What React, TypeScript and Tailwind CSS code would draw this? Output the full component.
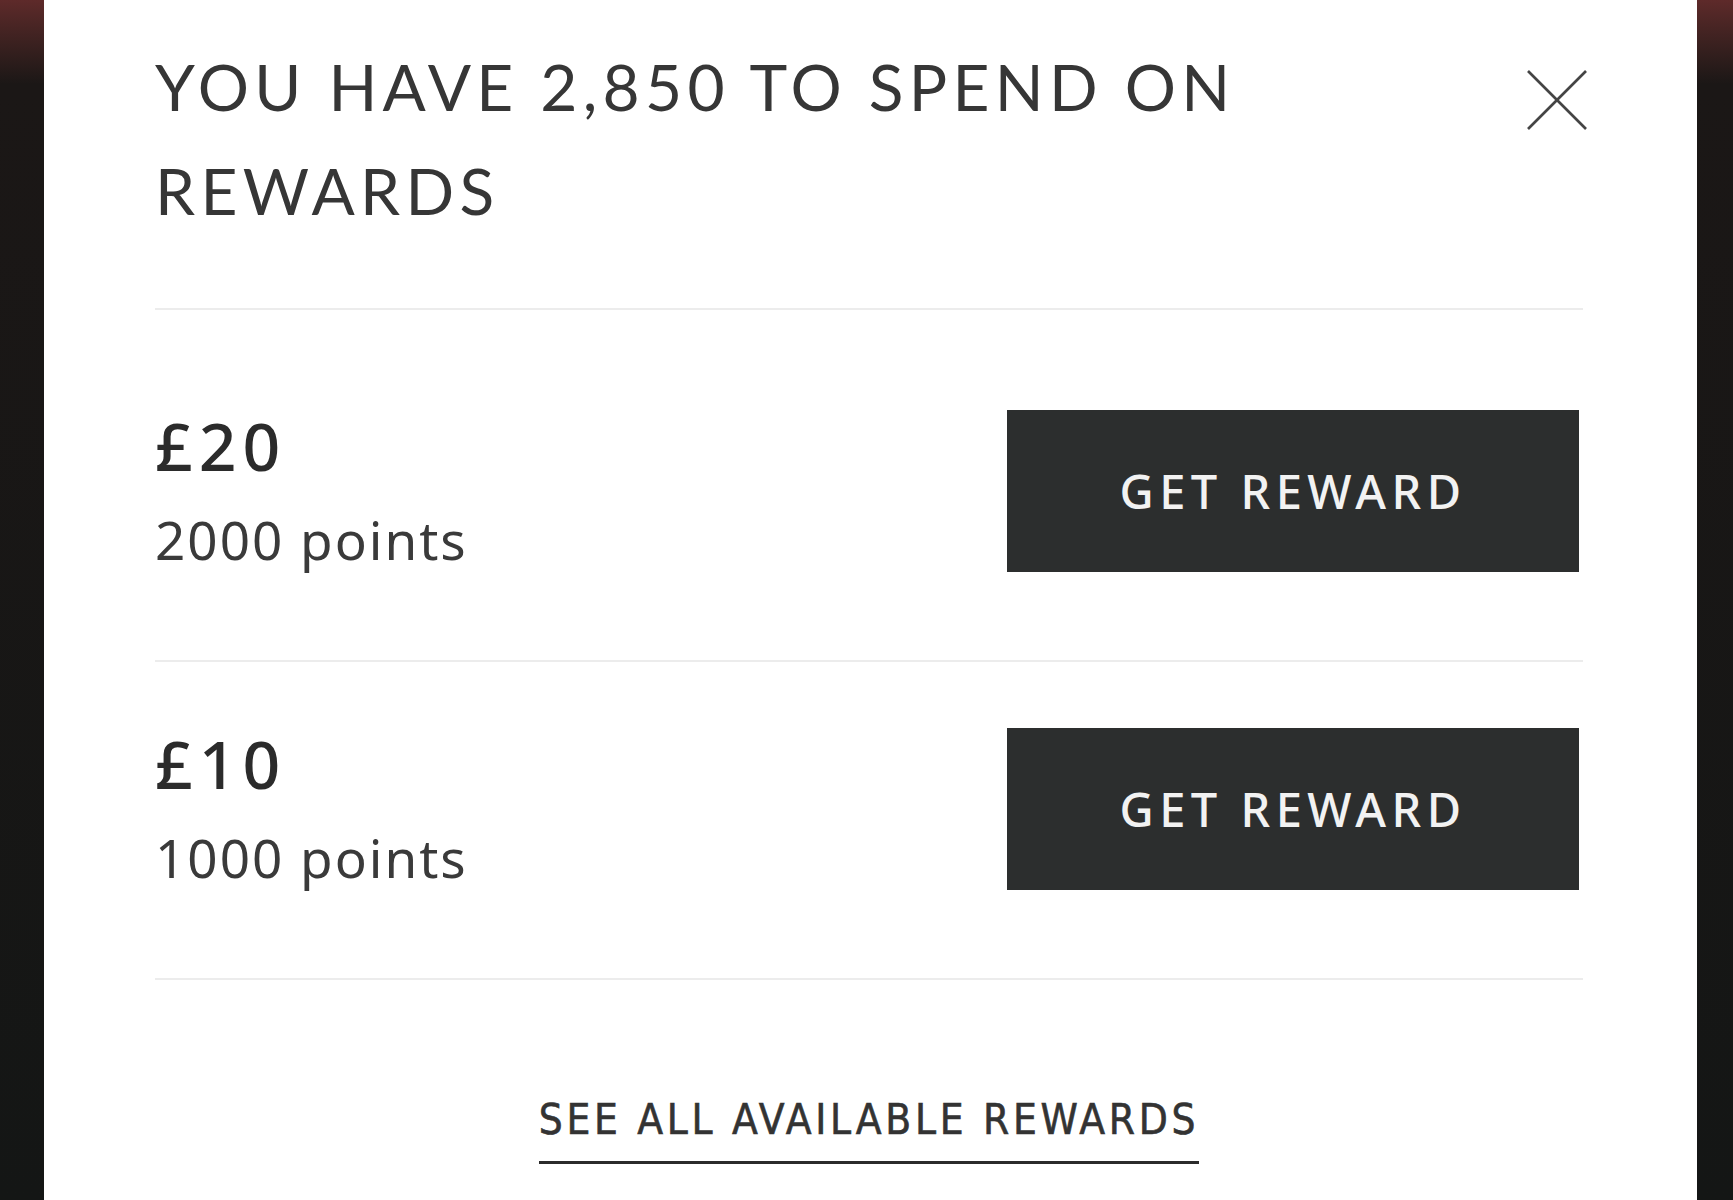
import React from "react";

function Row({ amount, points, top }: { amount: string; points: string; top: string }) {
  return (
    <div className={`flex items-start justify-between border-b-2 border-[#ececec] pb-[88px] ${top}`}>
      <div className="flex h-[162px] flex-col font-['Noto_Sans',sans-serif] text-[#2b2b2b]">
        <div className="text-[66px] leading-[70px] font-medium tracking-[6px]">{amount}</div>
        <div className="mt-[28px] text-[53px] leading-[64px] tracking-[2px] text-[#3a3a3a]">{points}</div>
      </div>
      <button className="mr-[4px] flex h-[162px] w-[572px] items-center justify-center bg-[#2c2e2e] font-['Noto_Sans',sans-serif] text-[47px] font-medium tracking-[5.5px] text-[#f2f2f2]">
        GET REWARD
      </button>
    </div>
  );
}

export default function App() {
  return (
    <div className="flex h-[1200px] w-[1733px] overflow-hidden bg-[#141615]">
      <div className="w-[44px] shrink-0 bg-gradient-to-b from-[#5e2a2a] via-[#1b1716] via-[7%] to-[#141615]" />
      <div className="flex flex-1 flex-col bg-white pl-[111px] pr-[114px]">
        <div className="flex items-start justify-between border-b-2 border-[#ececec] pt-[35px] pb-[65px]">
          <h1 className="font-['Lato',sans-serif] text-[64px] font-normal leading-[104px] tracking-[5.3px] text-[#363636]">
            YOU HAVE 2,850 TO SPEND ON
            <br />
            REWARDS
          </h1>
          <button className="-mr-[5px] mt-[34px] h-[62px] w-[62px] shrink-0 text-[#444]">
            <svg viewBox="0 0 62 62" className="h-full w-full" fill="none" stroke="currentColor" strokeWidth="2.6">
              <line x1="2" y1="2" x2="60" y2="60" />
              <line x1="60" y1="2" x2="2" y2="60" />
            </svg>
          </button>
        </div>
        <Row amount="£20" points="2000 points" top="pt-[100px]" />
        <Row amount="£10" points="1000 points" top="pt-[66px]" />
        <div className="flex justify-center pt-[118px]">
          <a className="border-b-[3px] border-[#2b2b2b] pb-[19px] font-['DejaVu_Sans_Condensed','Roboto',sans-serif] text-[42px] font-medium leading-[44px] tracking-[3.7px] text-[#333333] [-webkit-text-stroke:0.6px_#333333]">
            SEE ALL AVAILABLE REWARDS
          </a>
        </div>
      </div>
      <div className="w-[36px] shrink-0 bg-gradient-to-b from-[#5e2a2a] via-[#1b1716] via-[7%] to-[#141615]" />
    </div>
  );
}
